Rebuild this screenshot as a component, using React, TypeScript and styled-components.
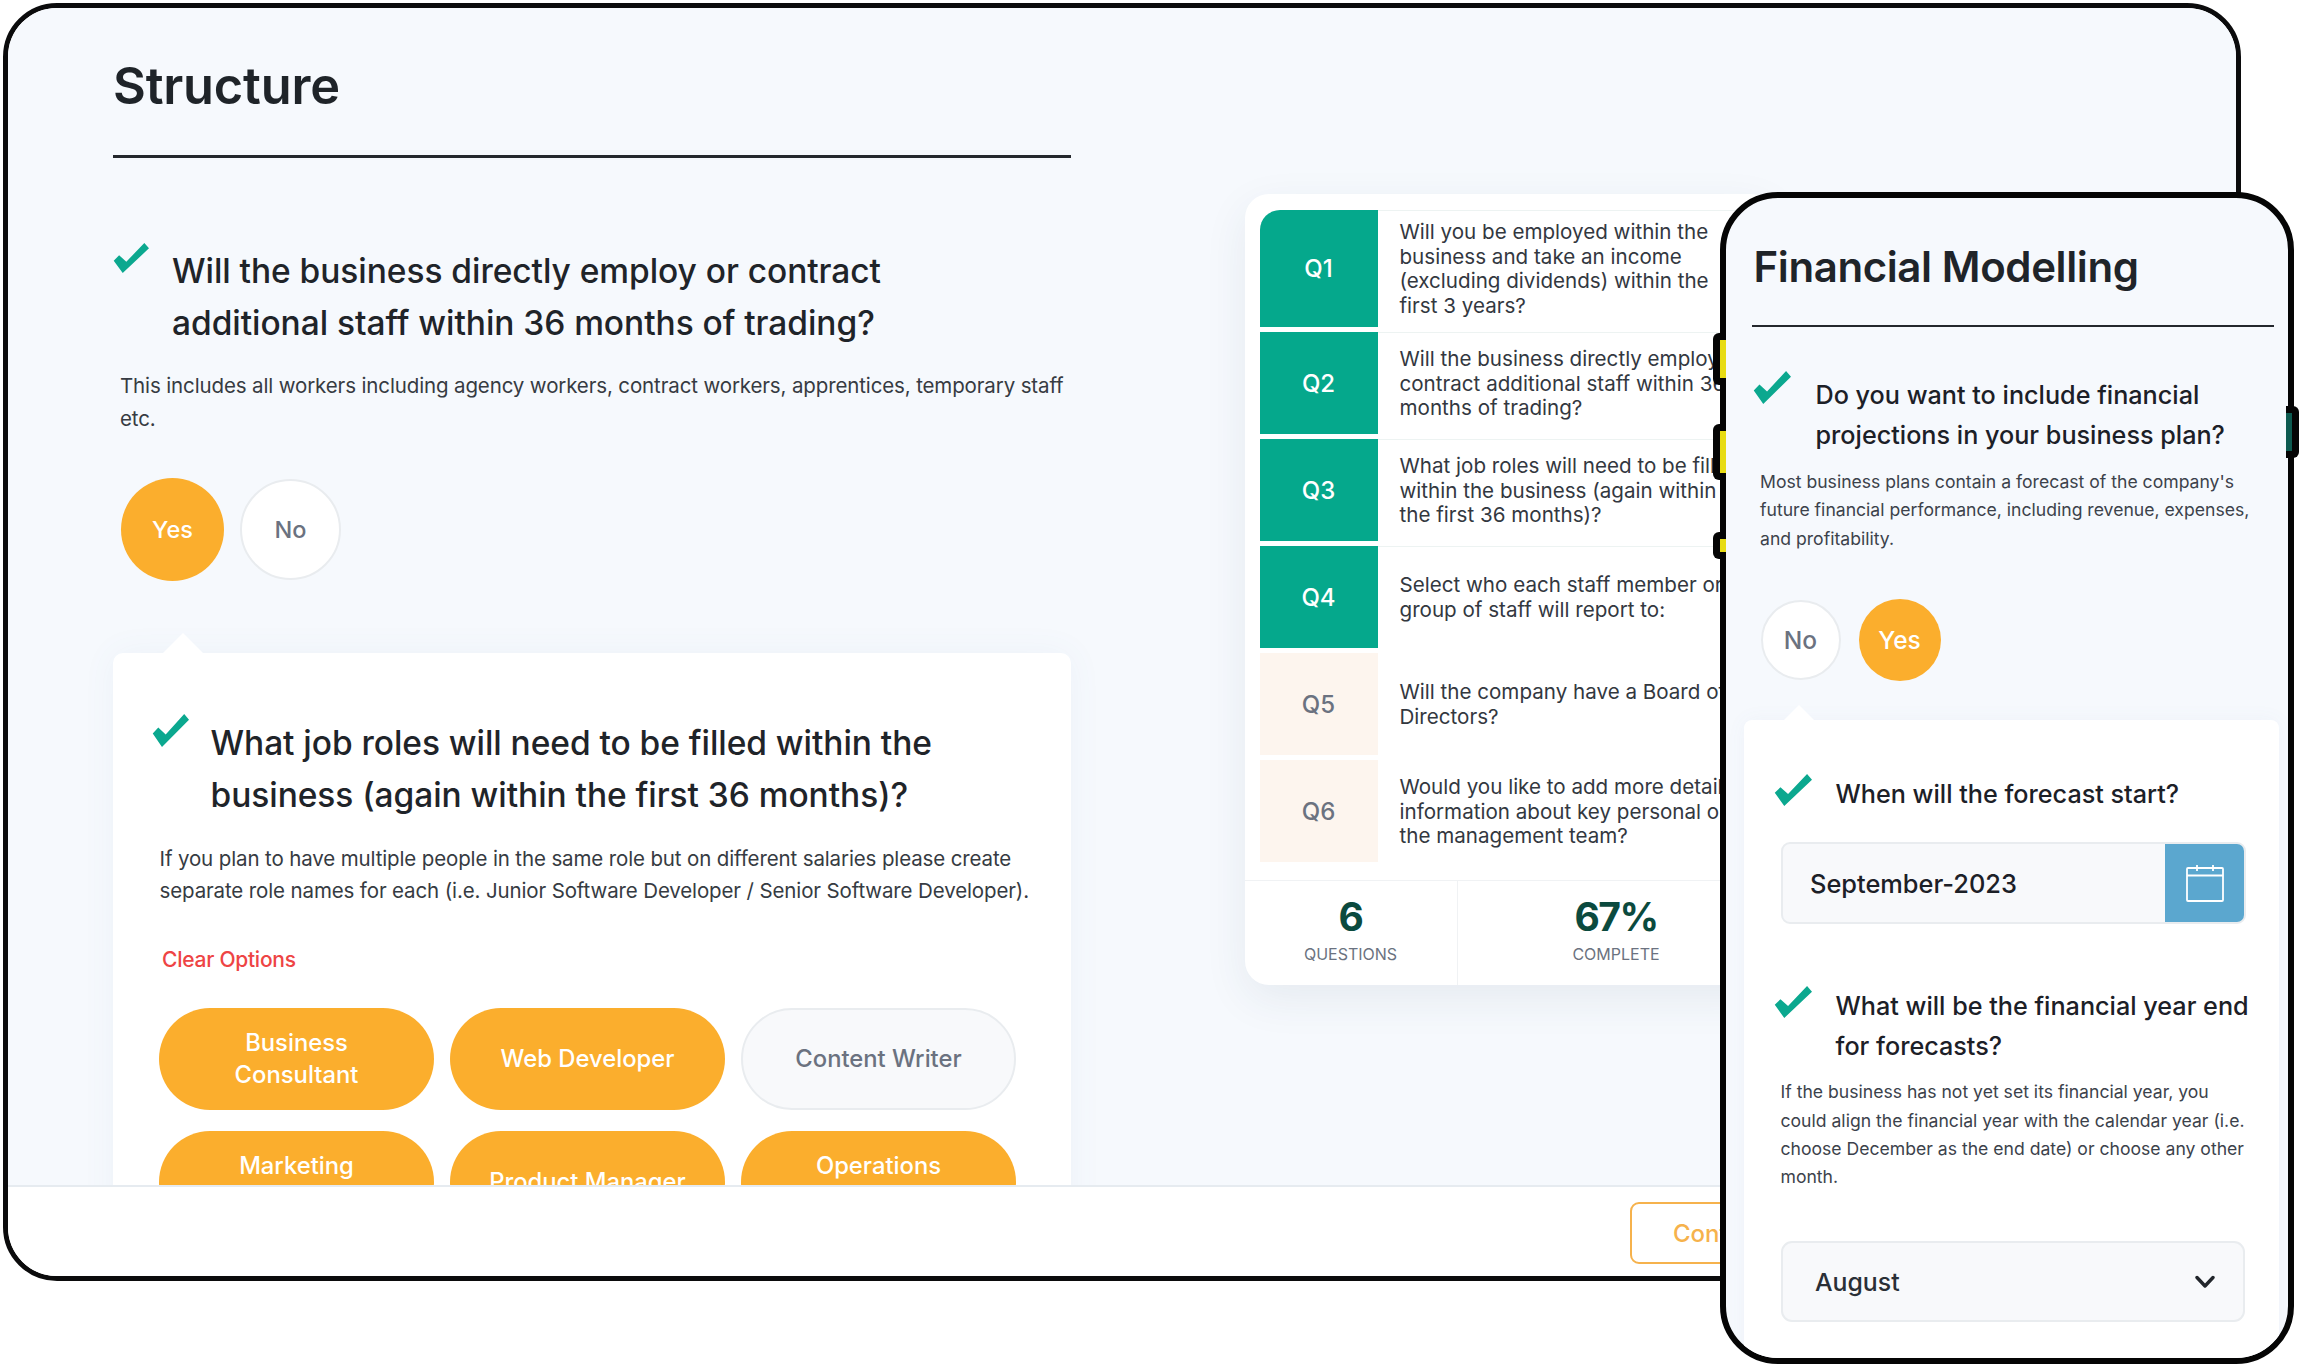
import React from "react";
import styled, { createGlobalStyle } from "styled-components";

const Global = createGlobalStyle`
  html, body { margin: 0; padding: 0; background: #fff; }
  body { font-family: "Inter", "Noto Sans", sans-serif; color: #1f2429; }
  * { box-sizing: border-box; }
`;

const Canvas = styled.div`
  position: relative;
  width: 2310px;
  height: 1370px;
  overflow: hidden;
  padding: 3px 0 0 3px;
`;

const Tablet = styled.div`
  width: 2238px;
  height: 1278px;
  border: 5px solid #0b0b0c;
  border-radius: 54px;
  overflow: hidden;
  display: flex;
  flex-direction: column;
  background: #fff;
`;

const TabletMain = styled.div`
  flex: 1;
  min-height: 0;
  overflow: hidden;
  display: flex;
  align-items: flex-start;
  padding-left: 105px;
  background: #f6f9fd;
`;

const LeftColumn = styled.div`
  width: 958px;
  flex-shrink: 0;
  padding-top: 49px;
`;

const PageTitle = styled.h1`
  margin: 0;
  font-size: 50.5px;
  line-height: 58px;
  font-weight: 600;
  letter-spacing: -0.2px;
  color: #1f2429;
`;

const Rule = styled.div`
  height: 2.5px;
  background: #24282d;
  margin-top: 40px;
`;

const QuestionRow = styled.div<{ $mt: number; $gap: number; $ml?: number }>`
  display: flex;
  align-items: flex-start;
  gap: ${(p) => p.$gap}px;
  margin-top: ${(p) => p.$mt}px;
  margin-left: ${(p) => p.$ml ?? 0}px;
`;

const CheckMark = styled.svg<{ $w: number; $h: number; $top: number }>`
  width: ${(p) => p.$w}px;
  height: ${(p) => p.$h}px;
  margin-top: ${(p) => p.$top}px;
  flex-shrink: 0;
  fill: #0ba88f;
`;

const BigQuestion = styled.div`
  font-size: 33.5px;
  line-height: 52.2px;
  font-weight: 500;
  letter-spacing: -0.05px;
  color: #1f2429;
  white-space: nowrap;
`;

const BigHelp = styled.p<{ $mt: number; $ml: number }>`
  margin: ${(p) => p.$mt}px 0 0 ${(p) => p.$ml}px;
  font-size: 20.5px;
  line-height: 32.4px;
  letter-spacing: -0.13px;
  color: #363b42;
  white-space: nowrap;
`;

const ToggleRow = styled.div`
  display: flex;
  align-items: center;
  gap: 16px;
  margin: 42.5px 0 0 8px;
`;

const Toggle = styled.div<{ $on?: boolean; $size: number; $font: number }>`
  width: ${(p) => p.$size}px;
  height: ${(p) => p.$size}px;
  border-radius: 50%;
  display: flex;
  align-items: center;
  justify-content: center;
  font-size: ${(p) => p.$font}px;
  font-weight: 500;
  background: ${(p) => (p.$on ? "#fbae2d" : "#fff")};
  color: ${(p) => (p.$on ? "#fff" : "#6b7280")};
  border: ${(p) => (p.$on ? "none" : "2px solid #e9ecef")};
`;

const RolesCard = styled.div`
  position: relative;
  margin-top: 72px;
  padding: 64.5px 39px 60px;
  background: #fff;
  border-radius: 10px;
  box-shadow: 0 0 34px rgba(90, 120, 170, 0.06);

  &::before {
    content: "";
    position: absolute;
    left: 50px;
    top: -20px;
    border-left: 20px solid transparent;
    border-right: 20px solid transparent;
    border-bottom: 20px solid #fff;
  }
`;

const ClearLink = styled.div`
  margin: 38px 0 0 10px;
  font-size: 21px;
  line-height: 30px;
  font-weight: 500;
  letter-spacing: -0.25px;
  color: #ee4444;
`;

const OptionGrid = styled.div`
  display: grid;
  grid-template-columns: repeat(3, 275px);
  grid-auto-rows: 102px;
  column-gap: 16px;
  row-gap: 21px;
  margin: 33px 0 0 7px;
`;

const Option = styled.div<{ $on?: boolean }>`
  border-radius: 51px;
  display: flex;
  align-items: center;
  justify-content: center;
  text-align: center;
  font-size: 23.8px;
  line-height: 32.5px;
  font-weight: 500;
  background: ${(p) => (p.$on ? "#fbae2d" : "#f8f9fb")};
  color: ${(p) => (p.$on ? "#fff" : "#6b7280")};
  border: ${(p) => (p.$on ? "none" : "2px solid #e9ecef")};
`;

const QuestionsCard = styled.div`
  width: 530px;
  flex-shrink: 0;
  margin: 186px 0 0 173.5px;
  padding-top: 16px;
  background: #fff;
  border-radius: 24px;
  box-shadow: 0 14px 44px rgba(40, 60, 90, 0.08);
`;

const QuestionList = styled.div`
  display: flex;
  flex-direction: column;
  gap: 5px;
  padding-left: 15px;
`;

const QuestionItem = styled.div`
  display: flex;
  min-height: 102px;
`;

const QuestionTag = styled.div<{ $done?: boolean; $first?: boolean }>`
  width: 118px;
  flex-shrink: 0;
  display: flex;
  align-items: center;
  justify-content: center;
  font-size: 24px;
  font-weight: 500;
  background: ${(p) => (p.$done ? "#05a88c" : "#fdf5ee")};
  color: ${(p) => (p.$done ? "#fff" : "#6b7280")};
  border-top-left-radius: ${(p) => (p.$first ? "20px" : "0")};
`;

const QuestionText = styled.div<{ $done?: boolean }>`
  flex: 1;
  display: flex;
  align-items: center;
  padding: 9px 0 9px 22px;
  font-size: 20.6px;
  line-height: 24.6px;
  color: #33383f;
  white-space: nowrap;
  border-top: 1px solid ${(p) => (p.$done ? "#edf3f2" : "transparent")};
`;

const Stats = styled.div`
  display: grid;
  grid-template-columns: 212px 1fr;
  height: 105px;
  margin-top: 18px;
  border-top: 1px solid #f0f2f4;
`;

const StatCell = styled.div`
  display: flex;
  flex-direction: column;
  align-items: center;
  justify-content: center;
  padding-bottom: 9px;

  & + & {
    border-left: 1px solid #f0f2f4;
  }
`;

const StatValue = styled.div`
  font-size: 39px;
  line-height: 46px;
  font-weight: 700;
  letter-spacing: -1.5px;
  color: #0b4a3e;
`;

const StatLabel = styled.div`
  font-size: 16px;
  line-height: 20px;
  margin-top: 4px;
  color: #6b7280;
`;

const TabletFooter = styled.div`
  height: 91px;
  flex-shrink: 0;
  display: flex;
  align-items: center;
  padding: 3px 0 0 1622px;
  background: #fff;
  border-top: 2px solid #e6ebf0;
`;

const ContinueButton = styled.div`
  width: 210px;
  height: 62px;
  padding-left: 41px;
  display: flex;
  align-items: center;
  border: 2.5px solid #f6b24c;
  border-radius: 9px;
  font-size: 24px;
  font-weight: 500;
  color: #f6b24c;
`;

const PhoneFrame = styled.div`
  position: absolute;
  left: 1719.5px;
  top: 192px;
  width: 574px;
  height: 1172px;
`;

const PhoneScreen = styled.div`
  width: 100%;
  height: 100%;
  border: 6.5px solid #050505;
  border-radius: 58px;
  background: #f6f9fd;
  overflow: hidden;
  display: flex;
  flex-direction: column;
  padding: 43.5px 13px 0 18px;
`;

const SideButton = styled.div<{ $top: number; $height: number; $side: "left" | "right"; $color: string }>`
  position: absolute;
  top: ${(p) => p.$top}px;
  height: ${(p) => p.$height}px;
  width: 13px;
  background: #050505;
  ${(p) => (p.$side === "left" ? "left: -6.5px;" : "right: -5.5px;")}
  border-radius: ${(p) => (p.$side === "left" ? "6px 0 0 6px" : "0 6px 6px 0")};

  &::after {
    content: "";
    position: absolute;
    top: 7px;
    bottom: 7px;
    width: 6px;
    background: ${(p) => p.$color};
    ${(p) => (p.$side === "left" ? "right: 0;" : "left: 0;")}
  }
`;

const PhoneTitle = styled.h2`
  margin: 0 0 0 10px;
  font-size: 42px;
  line-height: 50px;
  font-weight: 600;
  letter-spacing: -0.4px;
  color: #1f2429;
`;

const PhoneRule = styled.div`
  height: 2.5px;
  margin: 33px 0 0 8px;
  width: 522px;
  background: #24282d;
`;

const SmallQuestion = styled.div`
  font-size: 25.2px;
  line-height: 40px;
  font-weight: 500;
  color: #1c2027;
  white-space: nowrap;
`;

const SmallHelp = styled.p<{ $mt: number; $ml: number }>`
  margin: ${(p) => p.$mt}px 0 0 ${(p) => p.$ml}px;
  font-size: 17.6px;
  line-height: 28.4px;
  color: #3c424b;
  white-space: nowrap;
`;

const PhoneToggleRow = styled.div`
  display: flex;
  align-items: center;
  gap: 18px;
  margin: 46px 0 0 17px;
`;

const ForecastPanel = styled.div`
  position: relative;
  flex: 1;
  margin-top: 39px;
  width: 535.5px;
  padding: 54px 0 0 30px;
  background: #fff;
  border-radius: 8px 8px 0 0;
  box-shadow: 0 0 20px rgba(90, 120, 170, 0.05);

  &::before {
    content: "";
    position: absolute;
    left: 40px;
    top: -15px;
    border-left: 15px solid transparent;
    border-right: 15px solid transparent;
    border-bottom: 15px solid #fff;
  }
`;

const DateField = styled.div`
  display: flex;
  width: 464.5px;
  height: 82px;
  margin: 28px 0 0 7.5px;
  border-radius: 9px;
  overflow: hidden;
  background: #f8f9fb;
  border: 2px solid #e9ecef;
`;

const DateValue = styled.div`
  flex: 1;
  display: flex;
  align-items: center;
  padding-left: 27px;
  font-size: 25.4px;
  font-weight: 500;
  color: #1c2027;
`;

const DateButton = styled.div`
  width: 81px;
  margin: -2px -2px -2px 0;
  display: flex;
  align-items: center;
  justify-content: center;
  background: #5ba7cf;
`;

const SelectField = styled.div`
  display: flex;
  align-items: center;
  justify-content: space-between;
  width: 463.5px;
  height: 81px;
  margin: 49.5px 0 0 7.5px;
  padding: 0 28px 0 32px;
  border-radius: 11px;
  background: #f8f9fb;
  border: 2px solid #e9ecef;
  font-size: 24.8px;
  font-weight: 500;
  color: #2a2f36;
`;

const Tick = ({ w, h, top }: { w: number; h: number; top: number }) => (
  <CheckMark $w={w} $h={h} $top={top} viewBox="0 0 100 85" preserveAspectRatio="none">
    <polygon points="2,50 17,35 37,53 87,0 100,15 27,85" />
  </CheckMark>
);

const questions = [
  { id: "Q1", done: true, lines: ["Will you be employed within the", "business and take an income", "(excluding dividends) within the", "first 3 years?"] },
  { id: "Q2", done: true, lines: ["Will the business directly employ or", "contract additional staff within 36", "months of trading?"] },
  { id: "Q3", done: true, lines: ["What job roles will need to be filled", "within the business (again within", "the first 36 months)?"] },
  { id: "Q4", done: true, lines: ["Select who each staff member or", "group of staff will report to:"] },
  { id: "Q5", done: false, lines: ["Will the company have a Board of", "Directors?"] },
  { id: "Q6", done: false, lines: ["Would you like to add more detail", "information about key personal on", "the management team?"] },
];

const options: { lines: string[]; on: boolean }[] = [
  { lines: ["Business", "Consultant"], on: true },
  { lines: ["Web Developer"], on: true },
  { lines: ["Content Writer"], on: false },
  { lines: ["Marketing", "Manager"], on: true },
  { lines: ["Product Manager"], on: true },
  { lines: ["Operations", "Manager"], on: true },
];

const breakLines = (lines: string[]) =>
  lines.map((l, i) => (
    <React.Fragment key={l}>
      {i > 0 && <br />}
      {l}
    </React.Fragment>
  ));

export default function App() {
  return (
    <Canvas>
      <Global />
      <Tablet>
        <TabletMain>
          <LeftColumn>
            <PageTitle>Structure</PageTitle>
            <Rule />
            <QuestionRow $mt={87.5} $gap={23}>
              <Tick w={36} h={30} top={-2} />
              <BigQuestion>
                Will the business directly employ or contract
                <br />
                additional staff within 36 months of trading?
              </BigQuestion>
            </QuestionRow>
            <BigHelp $mt={21} $ml={7}>
              This includes all workers including agency workers, contract workers, apprentices, temporary staff
              <br />
              etc.
            </BigHelp>
            <ToggleRow>
              <Toggle $on $size={103} $font={23.5}>Yes</Toggle>
              <Toggle $size={101} $font={23.5}>No</Toggle>
            </ToggleRow>
            <RolesCard>
              <QuestionRow $mt={0} $gap={21.5}>
                <Tick w={37} h={33} top={-3.5} />
                <BigQuestion>
                  What job roles will need to be filled within the
                  <br />
                  business (again within the first 36 months)?
                </BigQuestion>
              </QuestionRow>
              <BigHelp $mt={21} $ml={7.5}>
                If you plan to have multiple people in the same role but on different salaries please create
                <br />
                separate role names for each (i.e. Junior Software Developer / Senior Software Developer).
              </BigHelp>
              <ClearLink>Clear Options</ClearLink>
              <OptionGrid>
                {options.map((o) => (
                  <Option key={o.lines.join(" ")} $on={o.on}>
                    <span>{breakLines(o.lines)}</span>
                  </Option>
                ))}
              </OptionGrid>
            </RolesCard>
          </LeftColumn>
          <QuestionsCard>
            <QuestionList>
              {questions.map((q, i) => (
                <QuestionItem key={q.id}>
                  <QuestionTag $done={q.done} $first={i === 0}>{q.id}</QuestionTag>
                  <QuestionText $done={q.done}>
                    <span>{breakLines(q.lines)}</span>
                  </QuestionText>
                </QuestionItem>
              ))}
            </QuestionList>
            <Stats>
              <StatCell>
                <StatValue>6</StatValue>
                <StatLabel>QUESTIONS</StatLabel>
              </StatCell>
              <StatCell>
                <StatValue>67%</StatValue>
                <StatLabel>COMPLETE</StatLabel>
              </StatCell>
            </Stats>
          </QuestionsCard>
        </TabletMain>
        <TabletFooter>
          <ContinueButton>Continue</ContinueButton>
        </TabletFooter>
      </Tablet>

      <PhoneFrame>
        <SideButton $side="left" $top={141} $height={52} $color="#e8dc14" />
        <SideButton $side="left" $top={232} $height={56} $color="#e8dc14" />
        <SideButton $side="left" $top={340} $height={27} $color="#e8dc14" />
        <SideButton $side="right" $top={214} $height={52} $color="#0d5a50" />
        <PhoneScreen>
          <PhoneTitle>Financial Modelling</PhoneTitle>
          <PhoneRule />
          <QuestionRow $mt={47.5} $gap={25} $ml={9}>
            <Tick w={38} h={33} top={-3.5} />
            <SmallQuestion>
              Do you want to include financial
              <br />
              projections in your business plan?
            </SmallQuestion>
          </QuestionRow>
          <SmallHelp $mt={13.5} $ml={16.5}>
            Most business plans contain a forecast of the company's
            <br />
            future financial performance, including revenue, expenses,
            <br />
            and profitability.
          </SmallHelp>
          <PhoneToggleRow>
            <Toggle $size={80} $font={24.5}>No</Toggle>
            <Toggle $on $size={82} $font={24.5}>Yes</Toggle>
          </PhoneToggleRow>
          <ForecastPanel>
            <QuestionRow $mt={0} $gap={24}>
              <Tick w={38} h={32} top={0} />
              <SmallQuestion>When will the forecast start?</SmallQuestion>
            </QuestionRow>
            <DateField>
              <DateValue>September-2023</DateValue>
              <DateButton>
                <svg width="38" height="38" viewBox="0 0 38 38" fill="none" stroke="#fff" strokeWidth="1.8">
                  <rect x="1" y="4" width="36" height="33" rx="1" />
                  <path d="M1 11.5H37" />
                  <path d="M11 1V7M27 1V7" />
                </svg>
              </DateButton>
            </DateField>
            <QuestionRow $mt={62} $gap={24}>
              <Tick w={38} h={32} top={-0.5} />
              <SmallQuestion>
                What will be the financial year end
                <br />
                for forecasts?
              </SmallQuestion>
            </QuestionRow>
            <SmallHelp $mt={12} $ml={7}>
              If the business has not yet set its financial year, you
              <br />
              could align the financial year with the calendar year (i.e.
              <br />
              choose December as the end date) or choose any other
              <br />
              month.
            </SmallHelp>
            <SelectField>
              <span>August</span>
              <svg width="20" height="14" viewBox="0 0 20 14" fill="none" stroke="#22262b" strokeWidth="3.4" strokeLinecap="round" strokeLinejoin="round">
                <path d="M2 2.5L10 11L18 2.5" />
              </svg>
            </SelectField>
          </ForecastPanel>
        </PhoneScreen>
      </PhoneFrame>
    </Canvas>
  );
}
